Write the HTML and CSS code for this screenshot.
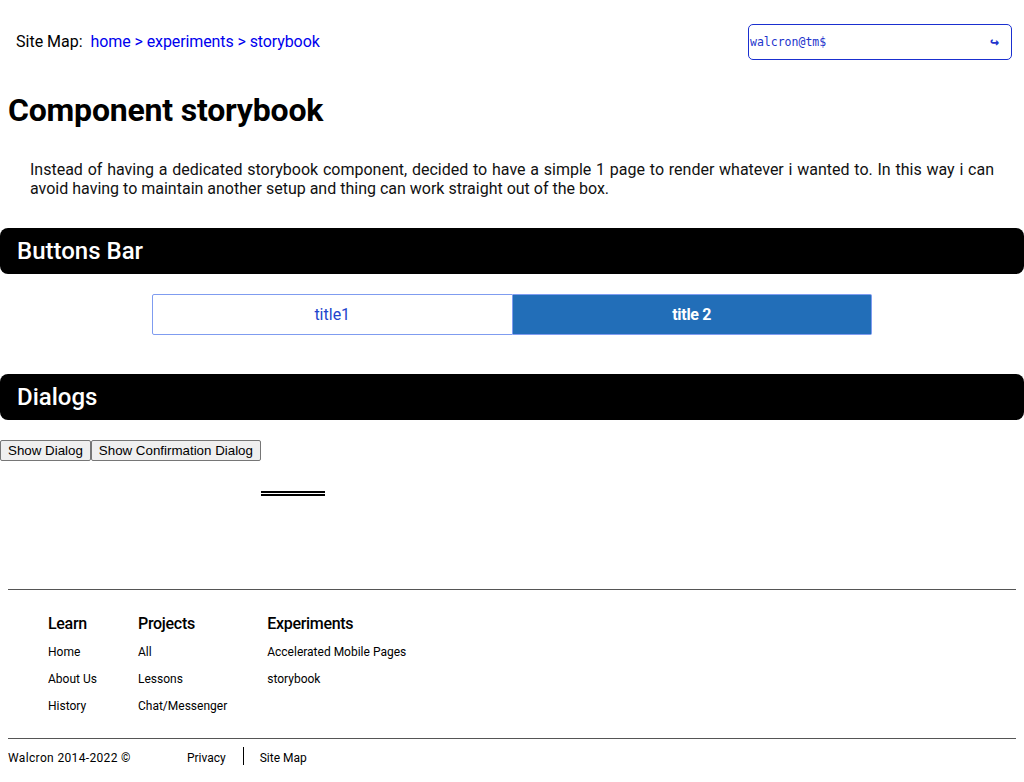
FILE: index.html
```html
<!DOCTYPE html>
<html lang="en">
<head>
<meta charset="utf-8">
<title>Component storybook</title>
<link rel="stylesheet" href="styles.css">
</head>
<body>
<header class="top">
  <nav class="sitemap">
    <span class="sitemap-label">Site Map:</span><a href="#">home &gt; </a><a href="#">experiments &gt; </a><a href="#">storybook</a>
  </nav>
  <div class="terminal">
    <span class="prompt">walcron@tm$</span>
    <span class="enter">&#8618;</span>
  </div>
</header>
<main>
  <h1 class="title">Component storybook</h1>
  <p class="intro">Instead of having a dedicated storybook component, decided to have a simple 1 page to render whatever i wanted to. In this way i can avoid having to maintain another setup and thing can work straight out of the box.</p>

  <h2 class="bar">Buttons Bar</h2>
  <div class="btnbar">
    <button class="btnbar-item">title1</button>
    <button class="btnbar-item active">title 2</button>
  </div>

  <h2 class="bar">Dialogs</h2>
  <div class="dialog-row">
    <button class="native">Show Dialog</button><button class="native">Show Confirmation Dialog</button>
    <div class="dline"></div>
  </div>
</main>
<footer class="footer">
  <div class="cols">
    <div class="col">
      <div class="col-head">Learn</div>
      <a href="#">Home</a>
      <a href="#">About Us</a>
      <a href="#">History</a>
    </div>
    <div class="col">
      <div class="col-head">Projects</div>
      <a href="#">All</a>
      <a href="#">Lessons</a>
      <a href="#">Chat/Messenger</a>
    </div>
    <div class="col">
      <div class="col-head">Experiments</div>
      <a href="#">Accelerated Mobile Pages</a>
      <a href="#">storybook</a>
    </div>
  </div>
  <div class="bottom">
    <span class="copy">Walcron 2014-2022 &copy;</span>
    <a href="#" class="blink">Privacy</a>
    <span class="divider"></span>
    <a href="#" class="blink">Site Map</a>
  </div>
</footer>
</body>
</html>
```
FILE: styles.css
```css
html, body {
  margin: 0;
  padding: 0;
  background: #fff;
}
body {
  font-family: Roboto, "Liberation Sans", Arial, sans-serif;
  color: #000;
  font-size: 16px;
}
a { text-decoration: none; }

.top {
  display: flex;
  align-items: center;
  justify-content: space-between;
  padding: 24px 12px 0 16px;
}
.sitemap {
  font-size: 16px;
  line-height: 19px;
  margin-top: -2px;
}
.sitemap-label { margin-right: 8px; }
.sitemap a { color: #0000ee; white-space: pre; letter-spacing: -0.1px; }

.terminal {
  box-sizing: border-box;
  width: 264px;
  height: 36px;
  border: 1px solid #1a2fd0;
  border-radius: 5px;
  display: flex;
  align-items: center;
  justify-content: space-between;
  padding: 0 12px 0 1px;
  font-family: "DejaVu Sans Mono", "Liberation Mono", monospace;
  font-size: 11.5px;
  color: #2233cc;
}
.prompt { margin-top: -1px; }
.enter { font-size: 15px; font-weight: 700; }

.title {
  margin: 32px 0 0 8px;
  font-size: 32px;
  font-weight: 700;
  line-height: 37.5px;
  letter-spacing: -0.2px;
}
.intro {
  margin: 30px 0 0;
  padding: 0 30px;
  font-size: 16px;
  line-height: 19px;
  text-align: justify;
  color: #111;
}

.bar {
  margin: 30px 0 0;
  height: 46px;
  line-height: 46px;
  padding: 0 17px;
  background: #000;
  color: #fff;
  border-radius: 8px;
  font-size: 24px;
  font-weight: 500;
}
.btnbar {
  margin: 20px auto 39px;
  width: 720px;
  display: flex;
}
.btnbar-item {
  flex: 1;
  height: 41px;
  box-sizing: border-box;
  border: 1px solid #7f9cf0;
  background: #fff;
  color: #2244cc;
  font-family: Roboto, "Liberation Sans", sans-serif;
  font-size: 16px;
  cursor: pointer;
}
.btnbar-item:first-child { border-radius: 2px 0 0 2px; }
.btnbar-item:last-child { border-radius: 0 2px 2px 0; border-left: none; }
.btnbar-item.active {
  background: #226eb8;
  color: #fff;
  font-weight: 700;
  letter-spacing: -0.3px;
}
.btnbar + .bar { margin-top: 0; }

.dialog-row {
  display: flex;
  align-items: flex-start;
  margin-top: 20px;
}
.native {
  font-family: "Liberation Sans", Arial, sans-serif;
  font-size: 13.33px;
  height: 21px;
  padding: 1px 7px;
  margin: 0;
  border: 1px solid #767676;
  border-radius: 2px;
  background: #efefef;
  color: #000;
}
.dline {
  width: 64px;
  height: 0;
  border-top: 5px double #000;
  margin-top: 51px;
}

.footer {
  margin: 93px 8px 0;
  border-top: 1px solid #555;
}
.cols {
  display: flex;
  gap: 40px;
  padding: 19px 40px 18px;
  border-bottom: 1px solid #555;
}
.col {
  display: flex;
  flex-direction: column;
}
.col:first-child { min-width: 50px; }
.col-head {
  font-size: 16px;
  font-weight: 500;
  line-height: 29px;
  margin-bottom: 1px;
  letter-spacing: -0.3px;
}
.col a {
  font-size: 12px;
  line-height: 27px;
  color: #000;
}
.bottom {
  display: flex;
  align-items: center;
  padding-top: 8px;
  font-size: 12px;
}
.copy, .blink { padding-top: 4px; }
.copy { margin-right: 56px; letter-spacing: 0.35px; }
.blink { color: #000; }
.divider {
  width: 1px;
  height: 18px;
  background: #000;
  margin: 0 16px 0 17px;
}
```
